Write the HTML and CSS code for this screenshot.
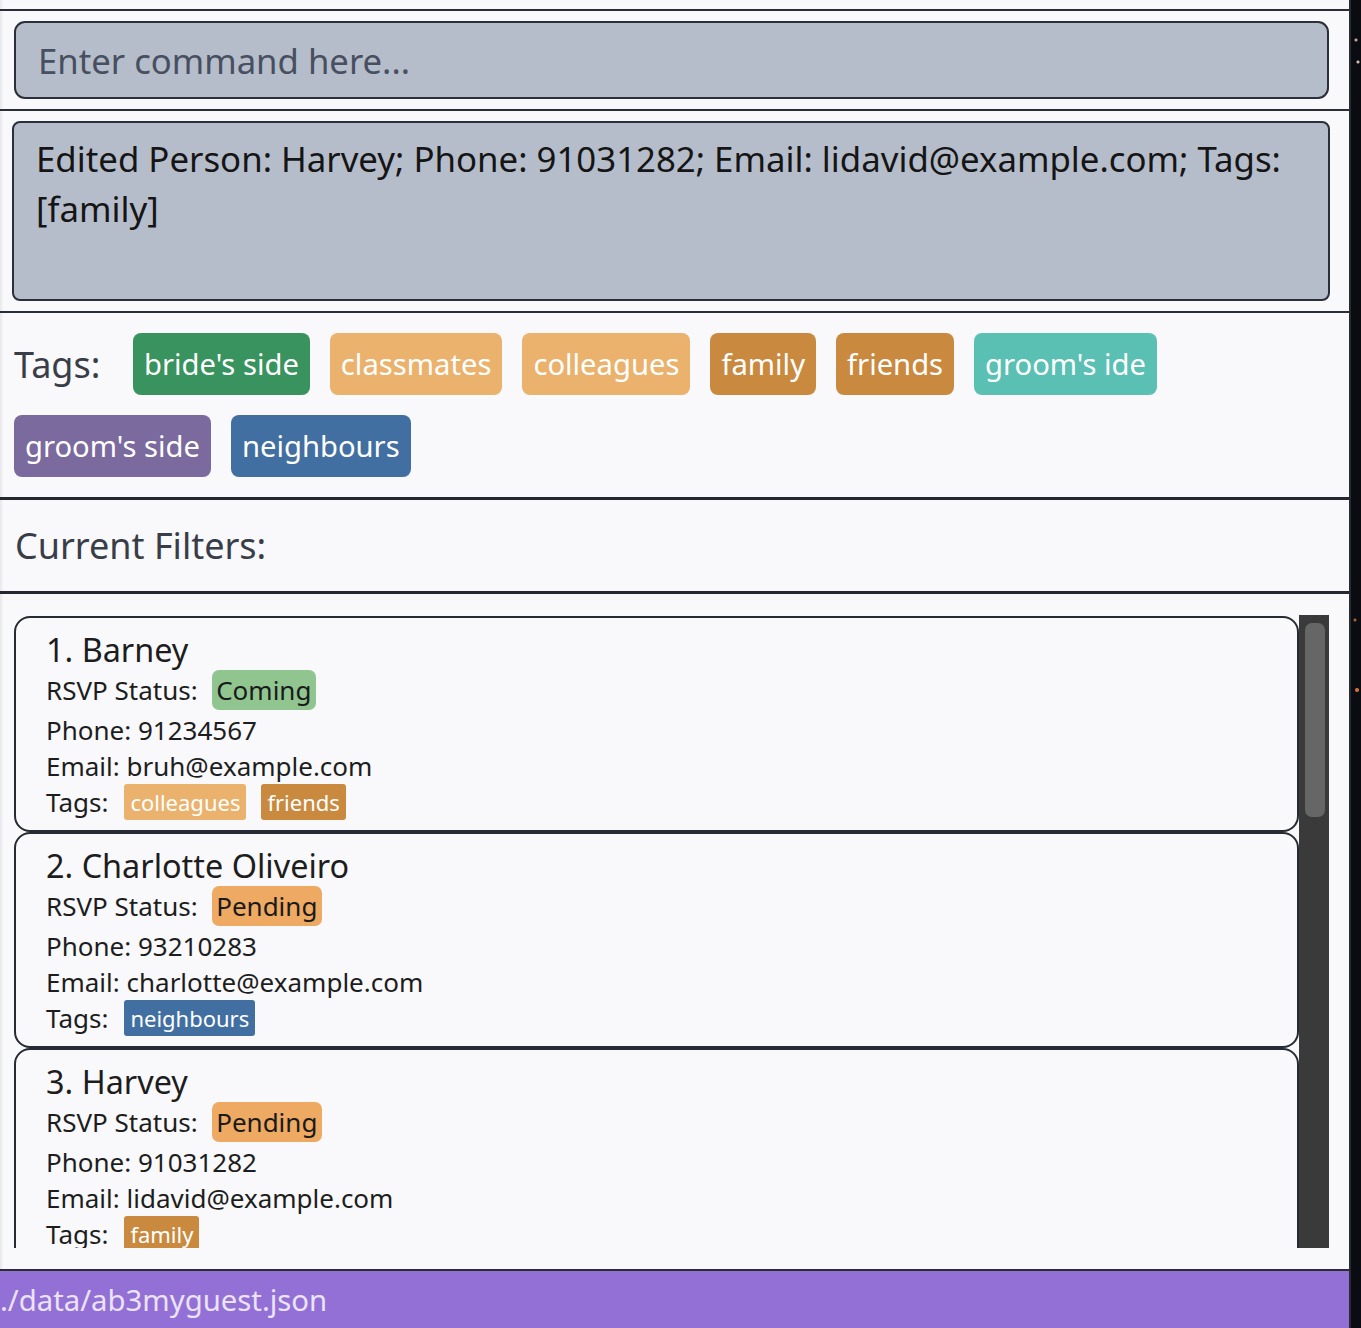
FILE: index.html
```html
<!DOCTYPE html>
<html lang="en">
<head>
<meta charset="utf-8">
<title>AB3 My Guest</title>
<link rel="stylesheet" href="styles.css">
</head>
<body>
<div class="desktop">
  <div class="window">
    <div class="top-gap"></div>
    <section class="command-section">
      <div class="command-box">Enter command here...</div>
    </section>
    <section class="result-section">
      <div class="result-box">Edited Person: Harvey; Phone: 91031282; Email: lidavid@example.com; Tags: [family]</div>
    </section>
    <section class="tags-section">
      <span class="tags-label">Tags:</span>
      <span class="chip c-bride">bride's side</span>
      <span class="chip c-light">classmates</span>
      <span class="chip c-light">colleagues</span>
      <span class="chip c-dark">family</span>
      <span class="chip c-dark">friends</span>
      <span class="chip c-teal">groom's ide</span>
      <span class="chip c-groom">groom's side</span>
      <span class="chip c-blue">neighbours</span>
    </section>
    <section class="filters-section">
      <span class="filters-label">Current Filters:</span>
    </section>
    <section class="list-section">
      <div class="list-view">
        <div class="cards">
          <div class="card">
            <div class="name">1. Barney</div>
            <div class="rsvp"><span class="label">RSVP Status:</span><span class="status s-coming">Coming</span></div>
            <div class="line">Phone: 91234567</div>
            <div class="line">Email: bruh@example.com</div>
            <div class="line tags-line"><span class="label">Tags:</span><span class="mini c-light">colleagues</span><span class="mini c-dark">friends</span></div>
          </div>
          <div class="card">
            <div class="name">2. Charlotte Oliveiro</div>
            <div class="rsvp"><span class="label">RSVP Status:</span><span class="status s-pending">Pending</span></div>
            <div class="line">Phone: 93210283</div>
            <div class="line">Email: charlotte@example.com</div>
            <div class="line tags-line"><span class="label">Tags:</span><span class="mini c-blue">neighbours</span></div>
          </div>
          <div class="card">
            <div class="name">3. Harvey</div>
            <div class="rsvp"><span class="label">RSVP Status:</span><span class="status s-pending">Pending</span></div>
            <div class="line">Phone: 91031282</div>
            <div class="line">Email: lidavid@example.com</div>
            <div class="line tags-line"><span class="label">Tags:</span><span class="mini c-dark">family</span></div>
          </div>
        </div>
        <div class="scrollbar"><div class="thumb"></div></div>
      </div>
    </section>
    <footer class="status-bar">./data/ab3myguest.json</footer>
  </div>
</div>
</body>
</html>
```

FILE: styles.css
```css
* { box-sizing: border-box; }

html, body {
  margin: 0;
  padding: 0;
}

body {
  background: #0a0c11;
  font-family: "Noto Sans", "Open Sans", sans-serif;
  width: 1361px;
  height: 1328px;
  overflow: hidden;
}

.desktop {
  width: 1361px;
  height: 1328px;
  background:
    radial-gradient(circle at 1356px 40px, #c9a0a0 0 1px, transparent 2px),
    radial-gradient(circle at 1358px 62px, #d8c0b0 0 1px, transparent 2px),
    radial-gradient(circle at 1357px 690px, #d07030 0 1.5px, transparent 2.5px),
    radial-gradient(circle at 1355px 620px, #a06030 0 1px, transparent 2px),
    #0a0c11;
}

.window {
  width: 1351px;
  height: 1328px;
  background: #f9f9fc;
  border-right: 2px solid #262a33;
  display: flex;
  flex-direction: column;
  box-shadow: inset 3px 0 2px -1px #e9e9ee;
}

.top-gap {
  height: 9px;
  flex: none;
}

.command-section {
  flex: none;
  border-top: 2px solid #2a2d36;
  border-bottom: 2px solid #2a2d36;
  padding: 10px 20px 10px 14px;
}

.command-box {
  height: 78px;
  background: #b6bdca;
  border: 2px solid #2b2f39;
  border-radius: 11px;
  padding: 0 0 0 22px;
  display: flex;
  align-items: center;
  font-size: 34.7px;
  color: #474f60;
}

.result-section {
  flex: none;
  padding: 10px 19px 10px 12px;
  border-bottom: 2px solid #2a2d36;
}

.result-box {
  height: 180px;
  background: #b6bdca;
  border: 2px solid #2b2f39;
  border-radius: 8px;
  padding: 11px 30px 0 22px;
  font-size: 34.8px;
  line-height: 50px;
  color: #151515;
}

.tags-section {
  flex: none;
  display: flex;
  flex-wrap: wrap;
  align-items: center;
  gap: 20px 20px;
  padding: 20px 14px 20px 14px;
  border-bottom: 3px solid #252831;
}

.tags-label {
  font-size: 36px;
  color: #383d48;
  width: 99px;
}

.chip {
  height: 62px;
  display: inline-flex;
  align-items: center;
  padding: 0 11px;
  border-radius: 8px;
  font-size: 29.2px;
  color: #ffffff;
}

.c-bride { background: #38935e; }
.c-light { background: #eab26c; }
.c-dark { background: #c98a3f; }
.c-teal { background: #5bc0b4; }
.c-groom { background: #7b6a9e; }
.c-blue { background: #426fa1; }

.filters-section {
  flex: none;
  height: 94px;
  padding: 0 15px;
  display: flex;
  align-items: center;
  border-bottom: 3px solid #252831;
}

.filters-label {
  font-size: 36px;
  color: #383d48;
}

.list-section {
  flex: none;
  height: 677px;
  padding: 21px 20px 0 14px;
  border-bottom: 2px solid #2a2d36;
}

.list-view {
  height: 633px;
  display: flex;
  overflow: hidden;
}

.cards {
  width: 1285px;
  flex: none;
  padding-top: 1px;
}

.card {
  height: 216px;
  border: 2px solid #262a33;
  border-radius: 16px;
  padding: 10px 0 0 30px;
  color: #1d1d1d;
}

.name {
  font-size: 32.4px;
  height: 40px;
  line-height: 42px;
}

.rsvp {
  height: 44px;
  display: flex;
  align-items: center;
  font-size: 26px;
}

.label {
  font-size: 26px;
}

.status {
  margin-left: 14px;
  height: 40px;
  display: inline-flex;
  align-items: center;
  padding: 0 4.5px;
  border-radius: 7px;
  font-size: 26px;
  color: #1a1a1a;
}

.s-coming { background: #90c590; }
.s-pending { background: #eea962; }

.line {
  height: 36px;
  display: flex;
  align-items: center;
  font-size: 26px;
}

.line.tags-line {
  align-items: flex-start;
}

.mini {
  height: 36px;
  display: inline-flex;
  align-items: center;
  padding: 0 6px;
  border-radius: 3px;
  font-size: 22px;
  color: #ffffff;
  margin-left: 15px;
}

.tags-line .label {
  line-height: 36px;
}

.tags-line .label + .mini {
  margin-left: 16px;
}

.scrollbar {
  width: 30px;
  flex: none;
  background: #3a3a3a;
  padding: 8px 4px 0 6px;
}

.thumb {
  height: 194px;
  background: #666666;
  border-radius: 7px;
}

.status-bar {
  flex: 1;
  background: #9370d6;
  color: #ebe3f7;
  font-size: 29.3px;
  padding: 9px 0 0 0;
  line-height: 40px;
}
```
